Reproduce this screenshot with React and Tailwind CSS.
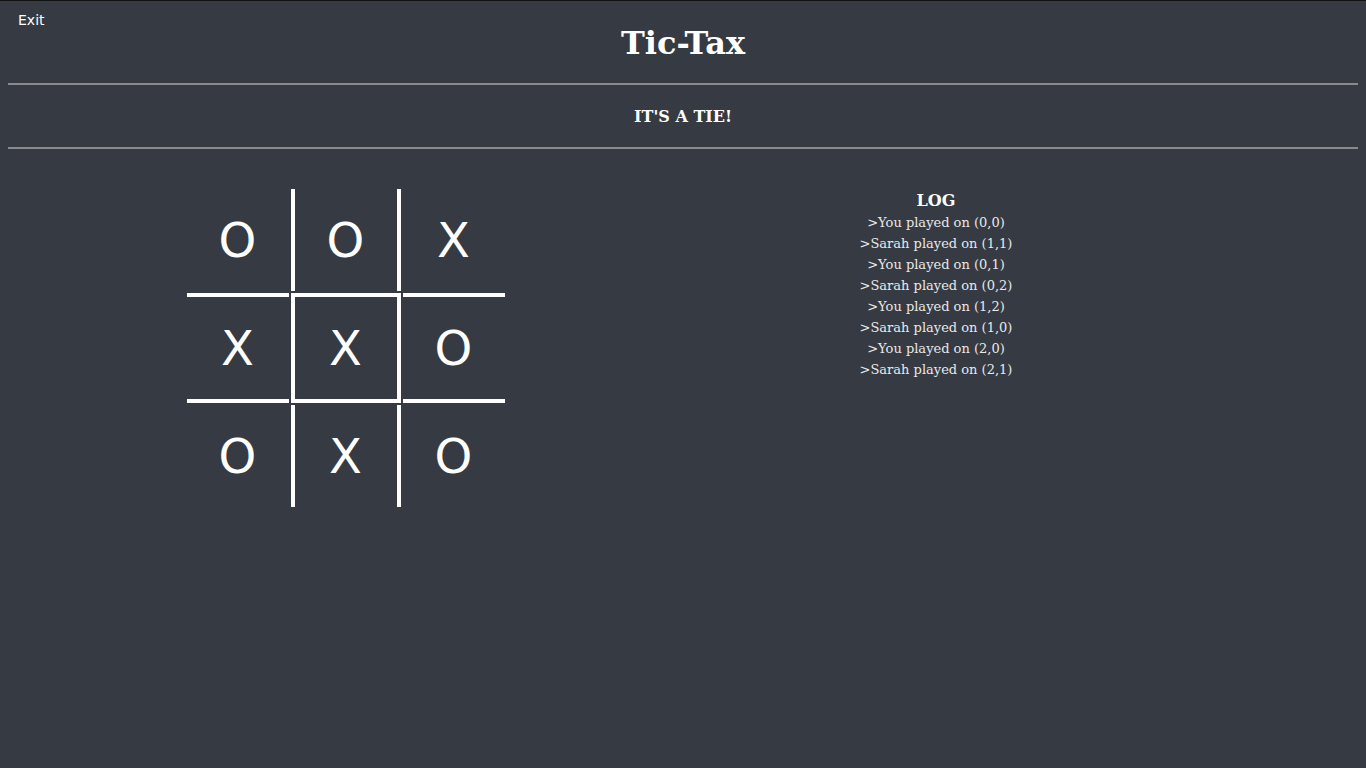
import React from 'react';

const board = [
  ['O', 'O', 'X'],
  ['X', 'X', 'O'],
  ['O', 'X', 'O'],
];

// which borders each cell gets, row by row
const cellBorders = [
  ['', 'border-x-4', ''],
  ['border-y-4', 'border-4', 'border-y-4'],
  ['', 'border-x-4', ''],
];

const log = [
  '>You played on (0,0)',
  '>Sarah played on (1,1)',
  '>You played on (0,1)',
  '>Sarah played on (0,2)',
  '>You played on (1,2)',
  '>Sarah played on (1,0)',
  '>You played on (2,0)',
  '>Sarah played on (2,1)',
];

export default function App() {
  return (
    <div
      className="min-h-screen bg-[#363a42] border-t border-[#111] px-2 text-white relative"
      style={{ fontFamily: '"DejaVu Serif", serif' }}
    >
      <button
        className="absolute left-[18px] top-[11px] text-[14px] leading-[17px] text-white bg-transparent"
        style={{ fontFamily: '"DejaVu Sans", sans-serif' }}
      >
        Exit
      </button>

      <h1 className="mt-[22px] text-center text-[32px] leading-[40px] font-bold">Tic-Tax</h1>

      <div className="mt-[20px] border-t-2 border-[#8a8a8a]" />

      <h4 className="mt-[22px] text-center text-base leading-[20px] font-bold">IT'S A TIE!</h4>

      <div className="mt-[20px] border-t-2 border-[#8a8a8a]" />

      <div className="flex mt-[40px]">
        <div className="w-1/2 flex justify-center">
          <div
            className="grid grid-cols-[102px_110px_102px] grid-rows-[102px_110px_102px] gap-[2px]"
            style={{ fontFamily: '"DejaVu Sans", sans-serif' }}
          >
            {board.map((row, r) =>
              row.map((v, c) => (
                <div
                  key={`${r}-${c}`}
                  className={`flex items-center justify-center border-white text-[48px] leading-none ${cellBorders[r][c]}`}
                >
                  {v}
                </div>
              ))
            )}
          </div>
        </div>

        <div className="w-[506px] text-center">
          <div className="text-base font-bold leading-[23px]">LOG</div>
          {log.map((line, i) => (
            <div key={i} className="text-[13px] leading-[21px] text-[#e8e8e8]">
              {line}
            </div>
          ))}
        </div>
      </div>
    </div>
  );
}
